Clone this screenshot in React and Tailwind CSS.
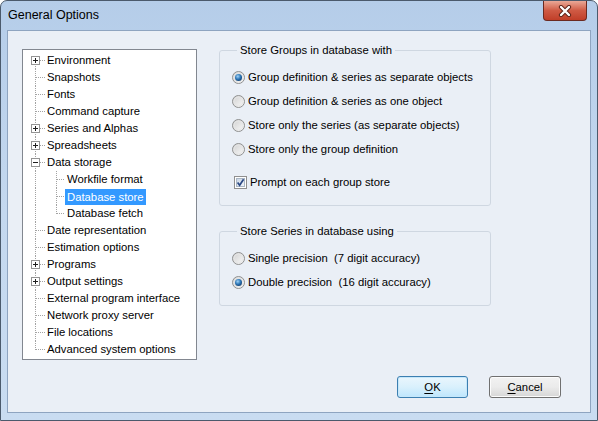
import React from "react";

const font = { fontFamily: '"Liberation Sans", Arial, sans-serif' };

const treeItems = [
  { label: "Environment", level: 0, box: "plus" },
  { label: "Snapshots", level: 0 },
  { label: "Fonts", level: 0 },
  { label: "Command capture", level: 0 },
  { label: "Series and Alphas", level: 0, box: "plus" },
  { label: "Spreadsheets", level: 0, box: "plus" },
  { label: "Data storage", level: 0, box: "minus" },
  { label: "Workfile format", level: 1 },
  { label: "Database store", level: 1, selected: true },
  { label: "Database fetch", level: 1, lastChild: true },
  { label: "Date representation", level: 0 },
  { label: "Estimation options", level: 0 },
  { label: "Programs", level: 0, box: "plus" },
  { label: "Output settings", level: 0, box: "plus" },
  { label: "External program interface", level: 0 },
  { label: "Network proxy server", level: 0 },
  { label: "File locations", level: 0 },
  { label: "Advanced system options", level: 0 },
];

function TreeLines({ item, first, last }) {
  const dot = { stroke: "#a3a3a3", strokeDasharray: "1 1", shapeRendering: "crispEdges" };
  if (item.level === 1) {
    return (
      <svg width="42" height="17" className="shrink-0">
        <line x1="12.5" y1="0" x2="12.5" y2="17" {...dot} />
        <line x1="33.5" y1="0" x2="33.5" y2={item.lastChild ? 9 : 17} {...dot} />
        <line x1="34" y1="8.5" x2="42" y2="8.5" {...dot} />
      </svg>
    );
  }
  return (
    <svg width="24" height="17" className="shrink-0">
      <line x1="12.5" y1={first ? 8 : 0} x2="12.5" y2={last ? 9 : 17} {...dot} />
      <line x1="13" y1="8.5" x2="23" y2="8.5" {...dot} />
      {item.box && (
        <g shapeRendering="crispEdges">
          <rect x="8.5" y="4.5" width="8" height="8" fill="#fff" stroke="#949494" />
          <line x1="10" y1="8.5" x2="15" y2="8.5" stroke="#1f1f1f" />
          {item.box === "plus" && <line x1="12.5" y1="6" x2="12.5" y2="11" stroke="#1f1f1f" />}
        </g>
      )}
    </svg>
  );
}

function Radio({ checked, label }) {
  return (
    <div className="flex items-center h-[24px]">
      <svg width="13" height="13" className="shrink-0">
        <defs>
          <linearGradient id="rbg" x1="0" y1="0" x2="1" y2="1">
            <stop offset="0" stopColor="#cfcfcf" />
            <stop offset="1" stopColor="#fbfbfb" />
          </linearGradient>
          <radialGradient id="rdot" cx="0.4" cy="0.35" r="0.7">
            <stop offset="0" stopColor="#9fd2f6" />
            <stop offset="0.55" stopColor="#2f78b8" />
            <stop offset="1" stopColor="#123f70" />
          </radialGradient>
        </defs>
        <circle cx="6.5" cy="6.5" r="6" fill="url(#rbg)" stroke="#8f9090" />
        <circle cx="6.5" cy="6.5" r="4.5" fill="none" stroke="#e6e6e6" />
        {checked && <circle cx="6.5" cy="6.5" r="3.5" fill="url(#rdot)" />}
      </svg>
      <span className="ml-[3px] text-black whitespace-pre">{label}</span>
    </div>
  );
}

function Fieldset({ legend, children, className }) {
  return (
    <fieldset className={`border border-[#cfd7e1] rounded-[3px] pl-[12px] pr-2 ${className}`}>
      <legend className="ml-[5px] px-[3px] leading-[14px] text-black">{legend}</legend>
      {children}
    </fieldset>
  );
}

export default function App() {
  return (
    <div
      className="w-[598px] h-[421px] flex flex-col bg-gradient-to-b from-[#b5cde9] via-[#c4d8ef] to-[#c9dcf1] border border-[#4b5a6c] rounded-t-[7px] overflow-hidden text-[11.3px]"
      style={font}
    >
      {/* Title bar */}
      <div className="relative h-[29px] flex items-center pl-[7px] shrink-0">
        <span className="text-[12.5px] text-black">General Options</span>
        <div className="absolute right-[10px] top-0 w-[44px] h-[20px] rounded-b-[4px] border border-t-0 border-[#6b2a20] bg-gradient-to-b from-[#e9a897] via-[#cf5a44] to-[#c03e28] flex items-center justify-center">
          <svg width="14" height="12" viewBox="0 0 14 12">
            <path d="M3 2 L11 10 M11 2 L3 10" stroke="#5a1f15" strokeWidth="4.2" strokeLinecap="round" />
            <path d="M3 2 L11 10 M11 2 L3 10" stroke="#ffffff" strokeWidth="2.4" strokeLinecap="round" />
          </svg>
        </div>
      </div>

      {/* Client area */}
      <div className="flex-1 mx-[6px] mb-[7px] border border-[#8ea4c0] bg-[#eaeff6] flex flex-col">
        <div className="flex items-start pl-[14px]">
          {/* Tree */}
          <div className="mt-[18px] w-[175px] h-[311px] border border-[#828790] bg-white pt-[2px] shrink-0">
            {treeItems.map((item, i) => (
              <div key={item.label} className="flex items-center h-[17px]">
                <TreeLines item={item} first={i === 0} last={i === treeItems.length - 1} />
                {item.selected ? (
                  <span className="bg-[#3399ff] text-white px-[2px] leading-[16px]">{item.label}</span>
                ) : (
                  <span className={`text-black whitespace-nowrap ${item.level === 1 ? "px-[2px]" : ""}`}>
                    {item.label}
                  </span>
                )}
              </div>
            ))}
          </div>

          {/* Options */}
          <div className="ml-[22px] mt-[12px] w-[272px] flex flex-col">
            <Fieldset legend="Store Groups in database with" className="pt-[8px] pb-[11px]">
              <Radio checked label="Group definition & series as separate objects" />
              <Radio label="Group definition & series as one object" />
              <Radio label="Store only the series (as separate objects)" />
              <Radio label="Store only the group definition" />
              <div className="flex items-center h-[24px] mt-[9px] pl-[2px]">
                <svg width="13" height="13" className="shrink-0">
                  <defs>
                    <linearGradient id="cbg" x1="0" y1="0" x2="1" y2="1">
                      <stop offset="0" stopColor="#c7d4e4" />
                      <stop offset="1" stopColor="#f4f7fb" />
                    </linearGradient>
                  </defs>
                  <rect x="0.5" y="0.5" width="12" height="12" fill="#fff" stroke="#8f8f8f" shapeRendering="crispEdges" />
                  <rect x="2.5" y="2.5" width="8" height="8" fill="url(#cbg)" stroke="#aab6c4" shapeRendering="crispEdges" />
                  <path d="M3.6 6.6 L5.6 9.2 L9.6 3.2" fill="none" stroke="#2b4985" strokeWidth="1.7" />
                </svg>
                <span className="ml-[3px] text-black">Prompt on each group store</span>
              </div>
            </Fieldset>

            <Fieldset legend="Store Series in database using" className="mt-[18px] pt-[8px] pb-[11px]">
              <Radio label="Single precision  (7 digit accuracy)" />
              <Radio checked label="Double precision  (16 digit accuracy)" />
            </Fieldset>
          </div>
        </div>

        {/* Buttons */}
        <div className="mt-[16px] flex justify-end gap-[21px] pr-[29px]">
          <button className="w-[71px] h-[22px] rounded-[3px] border border-[#3c7fb1] bg-gradient-to-b from-[#eaf6fd] via-[#d9f0fc] to-[#bee6fd] text-black shadow-[inset_0_0_0_1px_#c6e7fa]">
            <span className="underline underline-offset-2">O</span>K
          </button>
          <button className="w-[72px] h-[22px] rounded-[3px] border border-[#707070] bg-gradient-to-b from-[#f2f2f2] via-[#ebebeb] to-[#d6d6d6] text-black shadow-[inset_0_0_0_1px_#fcfcfc]">
            <span className="underline underline-offset-2">C</span>ancel
          </button>
        </div>
      </div>
    </div>
  );
}
